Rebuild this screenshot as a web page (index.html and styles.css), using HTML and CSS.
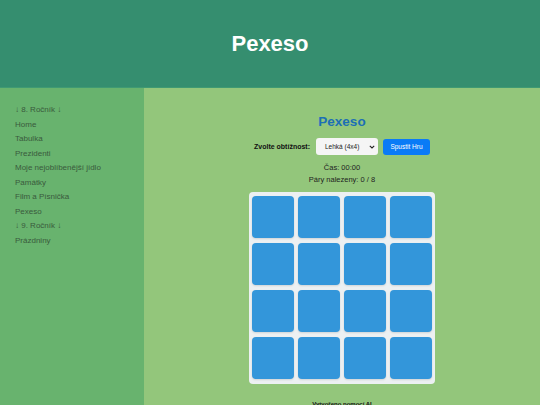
FILE: index.html
```html
<!DOCTYPE html>
<html lang="cs">
<head>
<meta charset="utf-8">
<title>Pexeso</title>
<link rel="stylesheet" href="styles.css">
</head>
<body>
<header class="site-header">
  <h1>Pexeso</h1>
</header>
<div class="layout">
  <nav class="sidebar">
    <a href="#">↓ 8. Ročník ↓</a>
    <a href="#">Home</a>
    <a href="#">Tabulka</a>
    <a href="#">Prezidenti</a>
    <a href="#">Moje nejoblíbenější jídlo</a>
    <a href="#">Památky</a>
    <a href="#">Film a Písnička</a>
    <a href="#">Pexeso</a>
    <a href="#">↓ 9. Ročník ↓</a>
    <a href="#">Prázdniny</a>
  </nav>
  <main class="content">
    <h2 class="game-title">Pexeso</h2>
    <div class="controls">
      <label class="label">Zvolte obtížnost:</label>
      <div class="select">Lehká (4x4)<span class="chev"><svg width="6" height="4" viewBox="0 0 6 4"><path d="M0.8 0.8 L3 3 L5.2 0.8" fill="none" stroke="#222" stroke-width="1.1"/></svg></span></div>
      <button class="btn">Spustit Hru</button>
    </div>
    <div class="stats">
      <div>Čas: 00:00</div>
      <div>Páry nalezeny: 0 / 8</div>
    </div>
    <div class="board">
      <div class="card"></div><div class="card"></div><div class="card"></div><div class="card"></div>
      <div class="card"></div><div class="card"></div><div class="card"></div><div class="card"></div>
      <div class="card"></div><div class="card"></div><div class="card"></div><div class="card"></div>
      <div class="card"></div><div class="card"></div><div class="card"></div><div class="card"></div>
    </div>
    <footer class="foot">Vytvořeno pomocí AI</footer>
  </main>
</div>
</body>
</html>
```
FILE: styles.css
```css
* { box-sizing: border-box; }
html, body { margin: 0; padding: 0; }
body {
  font-family: "Liberation Sans", Arial, sans-serif;
  background: #93c67b;
  min-height: 405px;
}
.site-header {
  background: #358e6f;
  height: 88px;
  display: flex;
  align-items: center;
  justify-content: center;
  border-bottom: 1px solid #3f9a73;
}
.site-header h1 {
  margin: 0;
  color: #fff;
  font-size: 22px;
  font-weight: bold;
}
.layout {
  display: flex;
  min-height: 317px;
}
.sidebar {
  width: 144px;
  background: #68b36e;
  padding: 15px 0 0 15px;
  display: flex;
  flex-direction: column;
}
.sidebar a {
  color: #3a5a3d;
  text-decoration: none;
  font-size: 8px;
  line-height: 14.55px;
}
.content {
  flex: 1;
  display: flex;
  flex-direction: column;
  align-items: center;
  background: #93c67b;
}
.game-title {
  margin: 24px 0 0;
  color: #1c6fb5;
  font-size: 13.5px;
  line-height: 20px;
}
.controls {
  display: flex;
  align-items: center;
  margin-top: 6px;
  font-size: 7px;
}
.label {
  font-weight: bold;
  color: #111;
  margin-right: 6px;
}
.select {
  width: 62px;
  height: 17px;
  background: #f5f5f5;
  border-radius: 3px;
  display: flex;
  align-items: center;
  justify-content: space-between;
  padding: 0 3px 0 9px;
  color: #222;
  font-size: 6.5px;
}
.chev { display: flex; }
.btn {
  margin-left: 5px;
  width: 47px;
  height: 16px;
  border: none;
  border-radius: 3px;
  background: #0a7bf6;
  color: #fff;
  font-family: inherit;
  font-size: 6.5px;
  padding: 0;
}
.stats {
  margin-top: 7px;
  text-align: center;
  font-size: 7.5px;
  line-height: 12px;
  color: #222;
}
.board {
  margin-top: 6px;
  width: 186px;
  background: #ecf0f2;
  border-radius: 4px;
  padding: 4px 3px 5px;
  display: grid;
  grid-template-columns: repeat(4, 42px);
  grid-auto-rows: 42px;
  column-gap: 4px;
  row-gap: 5px;
}
.card {
  background: #3396da;
  border-radius: 4px;
  box-shadow: 0 1px 2px rgba(0,0,0,0.12);
}
.foot {
  margin-top: 17px;
  font-size: 6px;
  font-weight: bold;
  color: #111;
}
```
